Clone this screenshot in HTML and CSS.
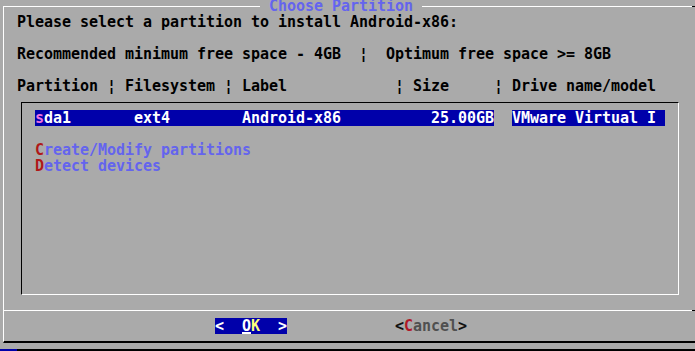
FILE: index.html
```
<!DOCTYPE html>
<html>
<head>
<meta charset="utf-8">
<link rel="stylesheet" href="styles.css">
</head>
<body>
<div class="dialog">
  <div class="topbar"><span class="title"> Choose Partition </span></div>
  <div class="content">
    <div class="row gap-after">Please select a partition to install Android-x86:</div>
    <div class="row gap-after">Recommended minimum free space - 4GB  ¦  Optimum free space &gt;= 8GB</div>
    <div class="row">Partition ¦ Filesystem ¦ Label            ¦ Size     ¦ Drive name/model</div>
    <div class="list">
      <div class="item selected"><span class="seg seg-main"><span class="sel-key">s</span>da1       ext4        Android-x86          25.00GB</span><span class="seg seg-drive">VMware Virtual I </span></div>
      <div class="item tag"><span class="tag-key">C</span>reate/Modify partitions</div>
      <div class="item tag"><span class="tag-key">D</span>etect devices</div>
    </div>
    <div class="separator"></div>
    <div class="buttons">
      <span class="btn btn-active">&lt;  <span class="btn-hot">O</span><span class="btn-label">K</span>  &gt;</span>
      <span class="btn btn-inactive">&lt;<span class="btn-key">C</span><span class="btn-label-in">ancel</span>&gt;</span>
    </div>
  </div>
</div>
<div class="shadow"></div>
</body>
</html>
```
FILE: styles.css
```
html {
  overflow: hidden;
}
body {
  margin: 0;
  width: 695px;
  height: 351px;
  overflow: hidden;
  background: #aaaaaa;
  color: #000;
  font-family: "DejaVu Sans Mono", "Liberation Mono", monospace;
  font-weight: bold;
  font-size: 15px;
  letter-spacing: -0.0308px;
  line-height: 16px;
}
.dialog {
  margin: 6px 0 0 3px;
  width: 700px;
  border-left: 1px solid #fff;
  border-bottom: 2px solid #000;
}
.topbar {
  display: flex;
  height: 1px;
  background: linear-gradient(90deg, #fff 688px, #000 688px);
}
.title {
  margin-left: 256px;
  margin-top: -8px;
  height: 16px;
  line-height: 16px;
  white-space: pre;
  background: #aaaaaa;
  color: #6464ee;
}
.content {
  padding-top: 7px;
}
.row {
  height: 16px;
  padding-left: 13px;
  white-space: pre;
}
.gap-after {
  margin-bottom: 16px;
}
.list {
  box-sizing: border-box;
  margin: 8px 0 0 17px;
  width: 658px;
  height: 193px;
  padding: 7px 0 0 13px;
  border-top: 1px solid #000;
  border-left: 1px solid #000;
  border-right: 1px solid #fff;
  border-bottom: 1px solid #fff;
}
.item {
  height: 16px;
  white-space: pre;
}
.selected {
  display: flex;
  gap: 18px;
  margin-bottom: 16px;
}
.seg {
  display: block;
  height: 16px;
  background: #0000aa;
  color: #fff;
  white-space: pre;
}
.seg-main {
  width: 459px;
}
.seg-drive {
  width: 153px;
}
.sel-key {
  color: #f070e0;
}
.tag {
  color: #6464ee;
}
.tag-key {
  color: #b01818;
}
.separator {
  margin-top: 15px;
  height: 1px;
  background: linear-gradient(90deg, #fff 688px, #000 688px);
}
.buttons {
  display: flex;
  gap: 108px;
  height: 16px;
  margin-top: 7px;
  padding: 0 0 7px 211px;
}
.btn {
  display: block;
  height: 16px;
  white-space: pre;
}
.btn-active {
  background: #0000aa;
  color: #fff;
}
.btn-hot {
  display: inline-block;
  height: 16px;
  box-shadow: inset 0 -2px 0 #fff;
}
.btn-label {
  color: #ffff7a;
}
.btn-inactive {
  color: #111;
}
.btn-key {
  color: #b01828;
}
.btn-label-in {
  color: #505050;
}
.shadow {
  margin-top: 6px;
  height: 16px;
  background: linear-gradient(90deg, #0000aa 17px, #000 17px);
}
```
